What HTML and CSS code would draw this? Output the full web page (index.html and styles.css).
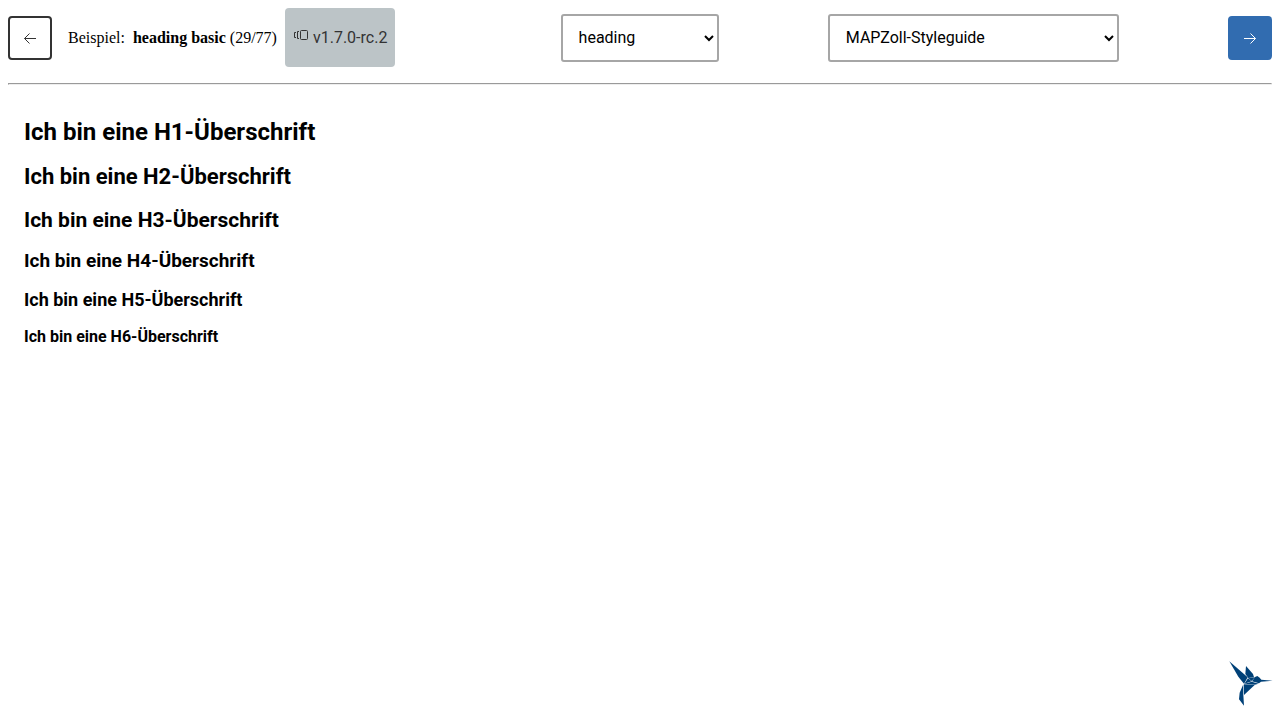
FILE: index.html
```html
<!DOCTYPE html>
<html lang="de">
<head>
<meta charset="utf-8">
<title>MAPZoll-Styleguide</title>
<meta name="viewport" content="width=device-width, initial-scale=1">
<link rel="stylesheet" href="styles.css">
</head>
<body>
<header class="toolbar">
  <div class="toolbar-start">
    <button class="nav-button" type="button" aria-label="Vorheriges Beispiel">
      <svg class="arrow" viewBox="0 0 16 16" aria-hidden="true"><path d="M14 8.500H2.500M7.500 3.500L2.500 8.500l5 5"/></svg>
    </button>
    <div class="example">
      <span>Beispiel:&nbsp; <strong>heading basic</strong> (29/77)</span>
      <span class="version">
        <svg class="version-icon" viewBox="0 0 16 12" aria-hidden="true"><path d="M3 2.500H1.500v5H3M6 1.500H4.500v7H6"/><rect x="7.500" y=".5" width="7" height="9" rx="1"/></svg>
        <span>v1.7.0-rc.2</span>
      </span>
    </div>
  </div>
  <select class="picker picker-component" aria-label="Komponente">
    <option>heading</option>
  </select>
  <select class="picker picker-theme" aria-label="Theme">
    <option>MAPZoll-Styleguide</option>
  </select>
  <button class="nav-button nav-button-primary" type="button" aria-label="Nächstes Beispiel">
    <svg class="arrow" viewBox="0 0 16 16" aria-hidden="true"><path d="M2 8.500h11.500M8.500 3.500l5 5-5 5"/></svg>
  </button>
</header>
<hr class="divider">
<main class="content">
  <h1 class="heading heading-1">Ich bin eine H1-Überschrift</h1>
  <h2 class="heading heading-2">Ich bin eine H2-Überschrift</h2>
  <h3 class="heading heading-3">Ich bin eine H3-Überschrift</h3>
  <h4 class="heading heading-4">Ich bin eine H4-Überschrift</h4>
  <h5 class="heading heading-5">Ich bin eine H5-Überschrift</h5>
  <h6 class="heading heading-6">Ich bin eine H6-Überschrift</h6>
</main>
<svg class="logo" viewBox="20 17 132 135" role="img" aria-label="Kolibri">
  <path d="M21 18L76 66 65 85 48 64Z"/>
  <path d="M71 32L92 56 95 66 78 68 69 56Z"/>
  <path d="M78 69L98 66 88 77Z"/>
  <path d="M98 65L105 62 112 67 117 73 151 76 116 79 110 84 89 78Z"/>
  <path d="M77 69L88 78 66 85Z"/>
  <path d="M88 79L109 85 97 88 65 86Z"/>
  <path d="M65 87L97 89 65 119Z"/>
  <path d="M63 87L63 118 65 151 50 132 52 112Z"/>
</svg>
</body>
</html>
```
FILE: styles.css
```css
body {
  margin: 8px;
  background: #fff;
  color: #000;
  font: 16px "Liberation Serif", "Times New Roman", serif;
}

.toolbar {
  display: flex;
  align-items: center;
  justify-content: space-between;
}

.toolbar-start {
  display: flex;
  align-items: center;
  gap: 16px;
  padding-right: 56px;
}

.example {
  display: flex;
  align-items: center;
  gap: 8px;
}

.nav-button {
  display: flex;
  align-items: center;
  justify-content: center;
  box-sizing: border-box;
  width: 44px;
  height: 44px;
  padding: 0;
  border: 2px solid #333;
  border-radius: 4px;
  background: #fff;
  color: #333;
}

.nav-button-primary {
  border-color: #316cb0;
  background: #316cb0;
  color: #fff;
}

.arrow {
  width: 16px;
  height: 16px;
  fill: none;
  stroke: currentColor;
}

.version {
  display: flex;
  align-items: center;
  gap: 4px;
  padding: 20px 8px;
  border-radius: 4px;
  background: #bcc4c7;
  color: #333;
  font: 16px/19px Roboto, sans-serif;
}

.version-icon {
  width: 16px;
  height: 12px;
  margin-bottom: 3px;
  fill: none;
  stroke: currentColor;
}

.picker {
  box-sizing: border-box;
  height: 48px;
  padding: 0 12px;
  border: 2px solid #a6a6a6;
  border-radius: 3px;
  background: #fff;
  color: #000;
  font: 16px Roboto, sans-serif;
}

.picker-component {
  width: 158px;
}

.picker-theme {
  width: 291px;
}

.divider {
  margin: 16px 0;
}

.content {
  display: flex;
  flex-direction: column;
  gap: 14px;
  padding: 15px 16px;
  font-family: Roboto, sans-serif;
}

.heading {
  margin: 0;
  font-weight: 700;
}

.heading-1 {
  font-size: 24px;
  line-height: 32px;
}

.heading-2 {
  font-size: 22px;
  line-height: 30px;
}

.heading-3 {
  font-size: 21px;
  line-height: 28px;
}

.heading-4 {
  font-size: 19px;
  line-height: 26px;
}

.heading-5 {
  font-size: 18px;
  line-height: 24px;
}

.heading-6 {
  font-size: 16px;
  line-height: 22px;
}

.logo {
  position: fixed;
  right: 7px;
  bottom: 14px;
  width: 44px;
  height: 45px;
  fill: #004178;
}
```
